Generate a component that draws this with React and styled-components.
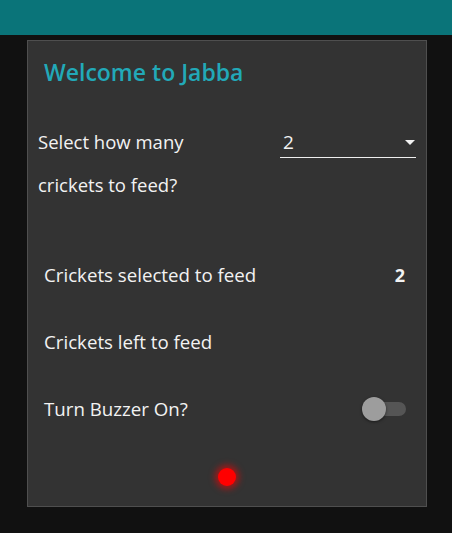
import React from 'react';
import styled, { createGlobalStyle } from 'styled-components';

const GlobalStyle = createGlobalStyle`
  html, body {
    margin: 0;
    padding: 0;
    background: #111111;
    font-family: "Open Sans", "Noto Sans", sans-serif;
  }
`;

const Page = styled.div`
  width: 452px;
  height: 533px;
  background: #111111;
  display: flex;
  flex-direction: column;
  overflow: hidden;
`;

const TopBar = styled.header`
  height: 35px;
  background: #0a7479;
  flex-shrink: 0;
`;

const Card = styled.main`
  margin: 5px 25px 0 27px;
  height: 467px;
  box-sizing: border-box;
  background: #333333;
  border: 1px solid #4f4f4f;
  display: flex;
  flex-direction: column;
  padding: 17px 10px 0 10px;
`;

const Title = styled.h1`
  margin: 0 0 0 6px;
  font-size: 23px;
  font-weight: 600;
  color: #22a9b8;
  line-height: 28px;
`;

const SelectRow = styled.div`
  display: flex;
  justify-content: space-between;
  align-items: flex-start;
  margin-top: 34px;
`;

const SelectLabel = styled.div`
  width: 180px;
  font-size: 18.5px;
  line-height: 43px;
  color: #f2f2f2;
`;

const SelectBox = styled.div`
  width: 136px;
  margin-top: 7px;
  height: 31px;
  border-bottom: 1px solid #eeeeee;
  display: flex;
  align-items: center;
  justify-content: space-between;
  font-size: 19px;
  color: #f2f2f2;
  padding-left: 3px;
  box-sizing: border-box;
`;

const Caret = styled.span`
  width: 0;
  height: 0;
  border-left: 5px solid transparent;
  border-right: 5px solid transparent;
  border-top: 5px solid #f2f2f2;
  margin-right: 1px;
`;

const InfoList = styled.div`
  display: flex;
  flex-direction: column;
  margin-top: 35px;
  padding: 0 11px 0 6px;
`;

const InfoRow = styled.div`
  height: 67px;
  display: flex;
  align-items: center;
  justify-content: space-between;
  font-size: 18.7px;
  color: #f2f2f2;
`;

const Value = styled.span`
  font-weight: 700;
  font-size: 18px;
`;

const Switch = styled.div`
  position: relative;
  width: 44px;
  height: 24px;
  display: flex;
  align-items: center;
  margin-right: -1px;
`;

const Track = styled.div`
  width: 34px;
  height: 14px;
  margin-left: 10px;
  border-radius: 7px;
  background: #555555;
`;

const Thumb = styled.div`
  position: absolute;
  left: 0;
  top: 0;
  width: 24px;
  height: 24px;
  border-radius: 50%;
  background: #9d9d9d;
  box-shadow: 0 1px 3px rgba(0, 0, 0, 0.5);
`;

const LedWrap = styled.div`
  display: flex;
  justify-content: center;
  margin-top: 26px;
`;

const Led = styled.div`
  width: 18px;
  height: 18px;
  border-radius: 50%;
  background: #ff0000;
  box-shadow: 0 0 6px 3px rgba(255, 0, 0, 0.55);
`;

export default function App() {
  return (
    <Page>
      <GlobalStyle />
      <TopBar />
      <Card>
        <Title>Welcome to Jabba</Title>
        <SelectRow>
          <SelectLabel>Select how many crickets to feed?</SelectLabel>
          <SelectBox>
            <span>2</span>
            <Caret />
          </SelectBox>
        </SelectRow>
        <InfoList>
          <InfoRow>
            <span>Crickets selected to feed</span>
            <Value>2</Value>
          </InfoRow>
          <InfoRow>
            <span>Crickets left to feed</span>
          </InfoRow>
          <InfoRow>
            <span>Turn Buzzer On?</span>
            <Switch>
              <Track />
              <Thumb />
            </Switch>
          </InfoRow>
        </InfoList>
        <LedWrap>
          <Led />
        </LedWrap>
      </Card>
    </Page>
  );
}
